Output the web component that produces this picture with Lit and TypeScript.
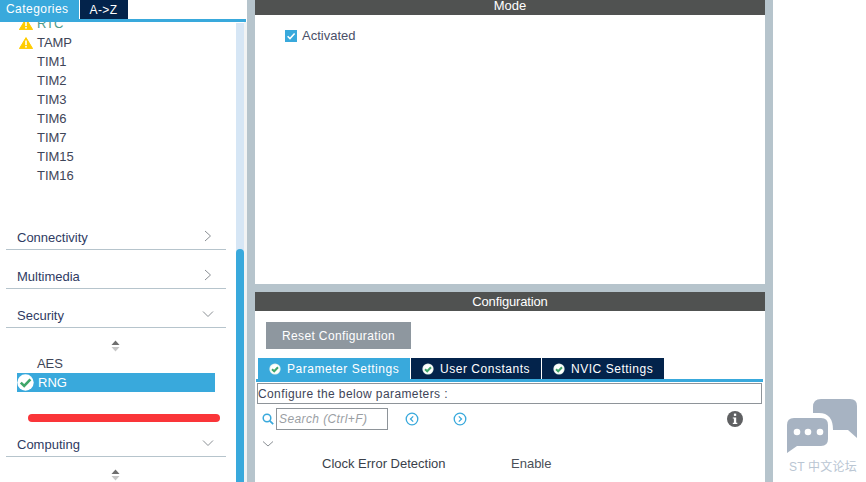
import { LitElement, html, css } from "lit";
import { customElement } from "lit/decorators.js";

const warn = html`<svg class="warn" viewBox="0 0 14 12"><path d="M7 0.6 L13.6 11.6 L0.4 11.6 Z" fill="#ffcc00" stroke="#ffcc00" stroke-linejoin="round"/><rect x="6.2" y="3.5" width="1.6" height="4.6" fill="#fff"/><rect x="6.2" y="9" width="1.6" height="1.6" fill="#fff"/></svg>`;
const right = html`<svg class="chev" viewBox="0 0 14 14"><path d="M4 2 L9.5 7 L4 12" fill="none" stroke="#8a8f94" stroke-width="1"/></svg>`;
const down = html`<svg class="chev" viewBox="0 0 14 14"><path d="M2 4.500 L7 9.500 L12 4.500" fill="none" stroke="#8a8f94" stroke-width="1"/></svg>`;
const updown = html`<svg class="updown" viewBox="0 0 9 12"><path d="M4.5 0.5 L8.5 5 L0.5 5 Z" fill="#6e6e6e"/><path d="M0.5 7 L8.5 7 L4.5 11.5 Z" fill="#c6c6c6"/></svg>`;
const tabCheck = html`<svg class="tabcheck" viewBox="0 0 12 12"><circle cx="6" cy="6" r="5.6" fill="#e8f4ec"/><circle cx="6" cy="6" r="4.6" fill="#fff"/><path d="M3 6.2 L5.2 8.3 L9 4.2" fill="none" stroke="#3fa66a" stroke-width="2"/></svg>`;

@customElement("app-root")
export class AppRoot extends LitElement {
  static styles = css`
    :host { display: block; width: 866px; height: 482px; overflow: hidden; background: #fff; font-family: "Liberation Sans", Arial, sans-serif; font-size: 12px; color: #3e4558; }
    .page { display: flex; width: 866px; height: 482px; position: relative; }

    .side { width: 247px; height: 482px; display: flex; flex-direction: column; flex: none; }
    .cats { display: flex; height: 19px; flex: none; align-items: flex-start; }
    .cat { height: 19px; display: flex; align-items: center; justify-content: center; font-size: 12px; letter-spacing: 0.45px; color: #fff; }
    .cat.on { width: 79px; background: #39a9dc; height: 22px; align-items: flex-start; justify-content: flex-start; padding: 2px 0 0 6px; box-sizing: border-box; }
    .cat.off { width: 48px; background: #03234b; margin-left: 1px; padding-right: 1px; box-sizing: border-box; }
    .catline { height: 3px; background: #39a9dc; flex: none; width: 246px; }
    .sidebody { flex: 1; display: flex; min-height: 0; }
    .list { width: 236px; flex: none; overflow: hidden; position: relative; }
    .scroll { width: 8px; background: #d6e6f5; flex: none; padding-top: 226px; box-sizing: border-box; margin-top: 1px; }
    .thumb { height: 100%; background: #39a9dc; border-radius: 4px 4px 0 0; }
    .edge { width: 3px; background: #f1f3f4; flex: none; }

    .tree { margin-top: -8px; }
    .item { height: 19px; display: flex; align-items: center; padding-left: 37px; font-size: 13px; position: relative; letter-spacing: -0.05px; }
    .warn { width: 14px; height: 12px; position: absolute; left: 18.5px; top: 3.5px; }
    .head { height: 39px; margin: 0 10px 0 6px; box-sizing: border-box; border-bottom: 1px solid #b6c4cc; display: flex; align-items: flex-end; justify-content: space-between; font-size: 13px; color: #2f3b63; padding: 0 11px 4px 11px; }
    .chev { width: 14px; height: 14px; margin-bottom: 2px; }
    .updown { width: 9px; height: 12px; display: block; }
    .ud { display: flex; justify-content: center; width: 230px; }
    .ud.first, .ud.last { margin-top: 12px; }
    .aes { margin-top: 2px; }
    .tree .spacer { height: 26px; }
    .sel { height: 19px; margin-left: 17px; width: 198px; background: #39a9dc; color: #fff; display: flex; align-items: center; font-size: 13px; gap: 4px; }
    .sel svg { width: 17px; height: 17px; flex: none; }
    .comp { margin-top: 26px; }
    .red { position: absolute; left: 28px; top: 392px; width: 192px; height: 7.5px; border-radius: 4px; background: #fa3539; }

    .gutter { width: 8px; background: #b6c4cc; flex: none; }
    .main { width: 510px; flex: none; height: 482px; display: flex; flex-direction: column; background: #b6c4cc; }
    .bar { background: #505251; color: #fff; text-align: center; font-size: 13px; flex: none; }
    .bar.mode { height: 15px; line-height: 12px; }
    .bar.conf { height: 19px; line-height: 20px; letter-spacing: -0.15px; }
    .modebody { height: 269px; background: #fff; flex: none; margin-bottom: 8px; padding: 14px 0 0 30px; box-sizing: border-box; display: flex; align-items: flex-start; gap: 5px; font-size: 13px; line-height: 13px; color: #4a5068; }
    .box { width: 12px; height: 12px; background: #39a9dc; display: flex; flex: none; margin-top: 1px; }
    .box svg { width: 12px; height: 12px; }
    .confbody { flex: 1; background: #fff; display: flex; flex-direction: column; min-height: 0; padding-right: 2px; }
    .reset { margin: 11px 0 0 11px; width: 145px; height: 27px; background: #8e979f; color: #fff; display: flex; align-items: center; justify-content: center; letter-spacing: 0.37px; font-size: 12px; flex: none; }
    .tabs { display: flex; margin: 9px 0 0 3px; height: 21px; gap: 1px; flex: none; }
    .tab { height: 21px; display: flex; align-items: center; background: #03234b; color: #fff; letter-spacing: 0.53px; font-size: 12px; box-sizing: border-box; padding-left: 11px; gap: 6px; }
    .tab.on { background: #39a9dc; }
    .tabcheck { width: 12px; height: 12px; flex: none; }
    .tabline { height: 3px; background: #39a9dc; margin: 0 0 0 1px; width: 507px; flex: none; }
    .confwrap { margin: 1px 0 0 2px; width: 505px; height: 21px; box-sizing: border-box; border: 1px solid #8e9499; line-height: 20px; font-size: 12px; letter-spacing: 0.39px; color: #3e4558; flex: none; }
    .search { display: flex; align-items: center; height: 22px; margin-top: 4px; flex: none; }
    .mag { width: 12px; height: 12px; margin-left: 7px; flex: none; }
    .input { width: 112px; height: 22px; box-sizing: border-box; border: 1px solid #8e9499; margin-left: 2px; font-style: italic; color: #9a9ea3; font-size: 12px; line-height: 20px; padding-left: 2px; letter-spacing: 0.4px; }
    .circ { width: 14px; height: 14px; flex: none; }
    .c1 { margin-left: 17px; }
    .c2 { margin-left: 34px; }
    .info { width: 16px; height: 16px; margin-left: 260px; flex: none; margin-top: -1px; }
    .chevrow { height: 16px; padding-left: 7px; margin-top: 8px; flex: none; }
    .chevrow svg { width: 12px; height: 12px; display: block; }
    .param { display: flex; margin-top: 2px; font-size: 13px; flex: none; color: #3a3f4a; }
    .pname { margin-left: 67px; width: 189px; }
    .pval { color: #4a4f58; }

    .wm { flex: 1; display: flex; flex-direction: column; align-items: flex-end; justify-content: flex-end; padding: 0 8px 8px 0; }
    .wm svg { width: 72px; height: 55px; display: block; }
    .wmt { font-size: 12px; color: #bac6d3; margin-top: 6px; font-family: "Liberation Sans", "Noto Sans CJK SC", sans-serif; line-height: 14px; letter-spacing: 0.2px; width: 69px; white-space: nowrap; }
  `;

  render() {
    const tims = ["TIM1", "TIM2", "TIM3", "TIM6", "TIM7", "TIM15", "TIM16"];
    return html`<div class="page">
      <div class="side">
        <div class="cats"><div class="cat on">Categories</div><div class="cat off">A-&gt;Z</div></div>
        <div class="catline"></div>
        <div class="sidebody">
          <div class="list">
            <div class="tree">
              <div class="item" style="color:#4e9a8c">${warn}RTC</div>
              <div class="item">${warn}TAMP</div>
              ${tims.map((t) => html`<div class="item">${t}</div>`)}
              <div class="spacer"></div>
              <div class="head"><span>Connectivity</span>${right}</div>
              <div class="head"><span>Multimedia</span>${right}</div>
              <div class="head"><span>Security</span>${down}</div>
              <div class="ud first">${updown}</div>
              <div class="item aes">AES</div>
              <div class="sel"><svg viewBox="0 0 17 17"><circle cx="8.5" cy="8.5" r="8.2" fill="#fff"/><path d="M3.8 8.6 L7.2 12 L13.4 5.4" fill="none" stroke="#3fa66a" stroke-width="2.6"/></svg>RNG</div>
              <div class="head comp"><span>Computing</span>${down}</div>
              <div class="ud last">${updown}</div>
            </div>
            <div class="red"></div>
          </div>
          <div class="scroll"><div class="thumb"></div></div>
          <div class="edge"></div>
        </div>
      </div>
      <div class="gutter"></div>
      <div class="main">
        <div class="bar mode">Mode</div>
        <div class="modebody">
          <span class="box"><svg viewBox="0 0 12 12"><path d="M2.6 6.2 L5 8.6 L9.6 3.6" fill="none" stroke="#fff" stroke-width="1.5"/></svg></span>
          <span>Activated</span>
        </div>
        <div class="bar conf">Configuration</div>
        <div class="confbody">
          <div class="reset">Reset Configuration</div>
          <div class="tabs">
            <div class="tab on" style="width:152px">${tabCheck}Parameter Settings</div>
            <div class="tab" style="width:130px">${tabCheck}User Constants</div>
            <div class="tab" style="width:122px">${tabCheck}NVIC Settings</div>
          </div>
          <div class="tabline"></div>
          <div class="confwrap">Configure the below parameters :</div>
          <div class="search">
            <svg class="mag" viewBox="0 0 12 12"><circle cx="5" cy="5" r="3.8" fill="none" stroke="#39a9dc" stroke-width="1.5"/><path d="M7.8 7.8 L11.2 11.2" stroke="#39a9dc" stroke-width="1.7"/></svg>
            <div class="input">Search (Ctrl+F)</div>
            <svg class="circ c1" viewBox="0 0 14 14"><circle cx="7" cy="7" r="5.8" fill="none" stroke="#39a9dc" stroke-width="1.3"/><path d="M8.2 4.4 L5.5 7 L8.2 9.6" fill="none" stroke="#39a9dc" stroke-width="1.3"/></svg>
            <svg class="circ c2" viewBox="0 0 14 14"><circle cx="7" cy="7" r="5.8" fill="none" stroke="#39a9dc" stroke-width="1.3"/><path d="M5.8 4.4 L8.5 7 L5.8 9.6" fill="none" stroke="#39a9dc" stroke-width="1.3"/></svg>
            <svg class="info" viewBox="0 0 16 16"><circle cx="8" cy="8" r="8" fill="#5f6062"/><rect x="6.9" y="2.6" width="2.3" height="2.3" fill="#fff"/><path d="M5.8 6.4 H9.2 V11.8 H10.3 V13 H5.8 V11.8 H6.9 V7.6 H5.8 Z" fill="#fff"/></svg>
          </div>
          <div class="chevrow"><svg viewBox="0 0 12 12"><path d="M1 3.5 L6 8 L11 3.5" fill="none" stroke="#8a8f94"/></svg></div>
          <div class="param"><span class="pname">Clock Error Detection</span><span class="pval">Enable</span></div>
        </div>
      </div>
      <div class="gutter"></div>
      <div class="wm">
        <svg viewBox="0 0 72 55">
          <path d="M35 0 H64 Q71 0 71 7 V39 L62 31 H47 Q47 14 33 14 H27 V8 Q27 0 35 0 Z" fill="#a7b3c2"/>
          <path d="M8 19 H35 Q42 19 42 26 V40 Q42 47 35 47 H11 L1 54 V26 Q1 19 8 19 Z" fill="#a7b3c2"/>
          <circle cx="11" cy="33" r="3.3" fill="#fff"/><circle cx="22" cy="33" r="3.3" fill="#fff"/><circle cx="34" cy="33" r="3.3" fill="#fff"/>
        </svg>
        <div class="wmt">ST 中文论坛</div>
      </div>
    </div>`;
  }
}
